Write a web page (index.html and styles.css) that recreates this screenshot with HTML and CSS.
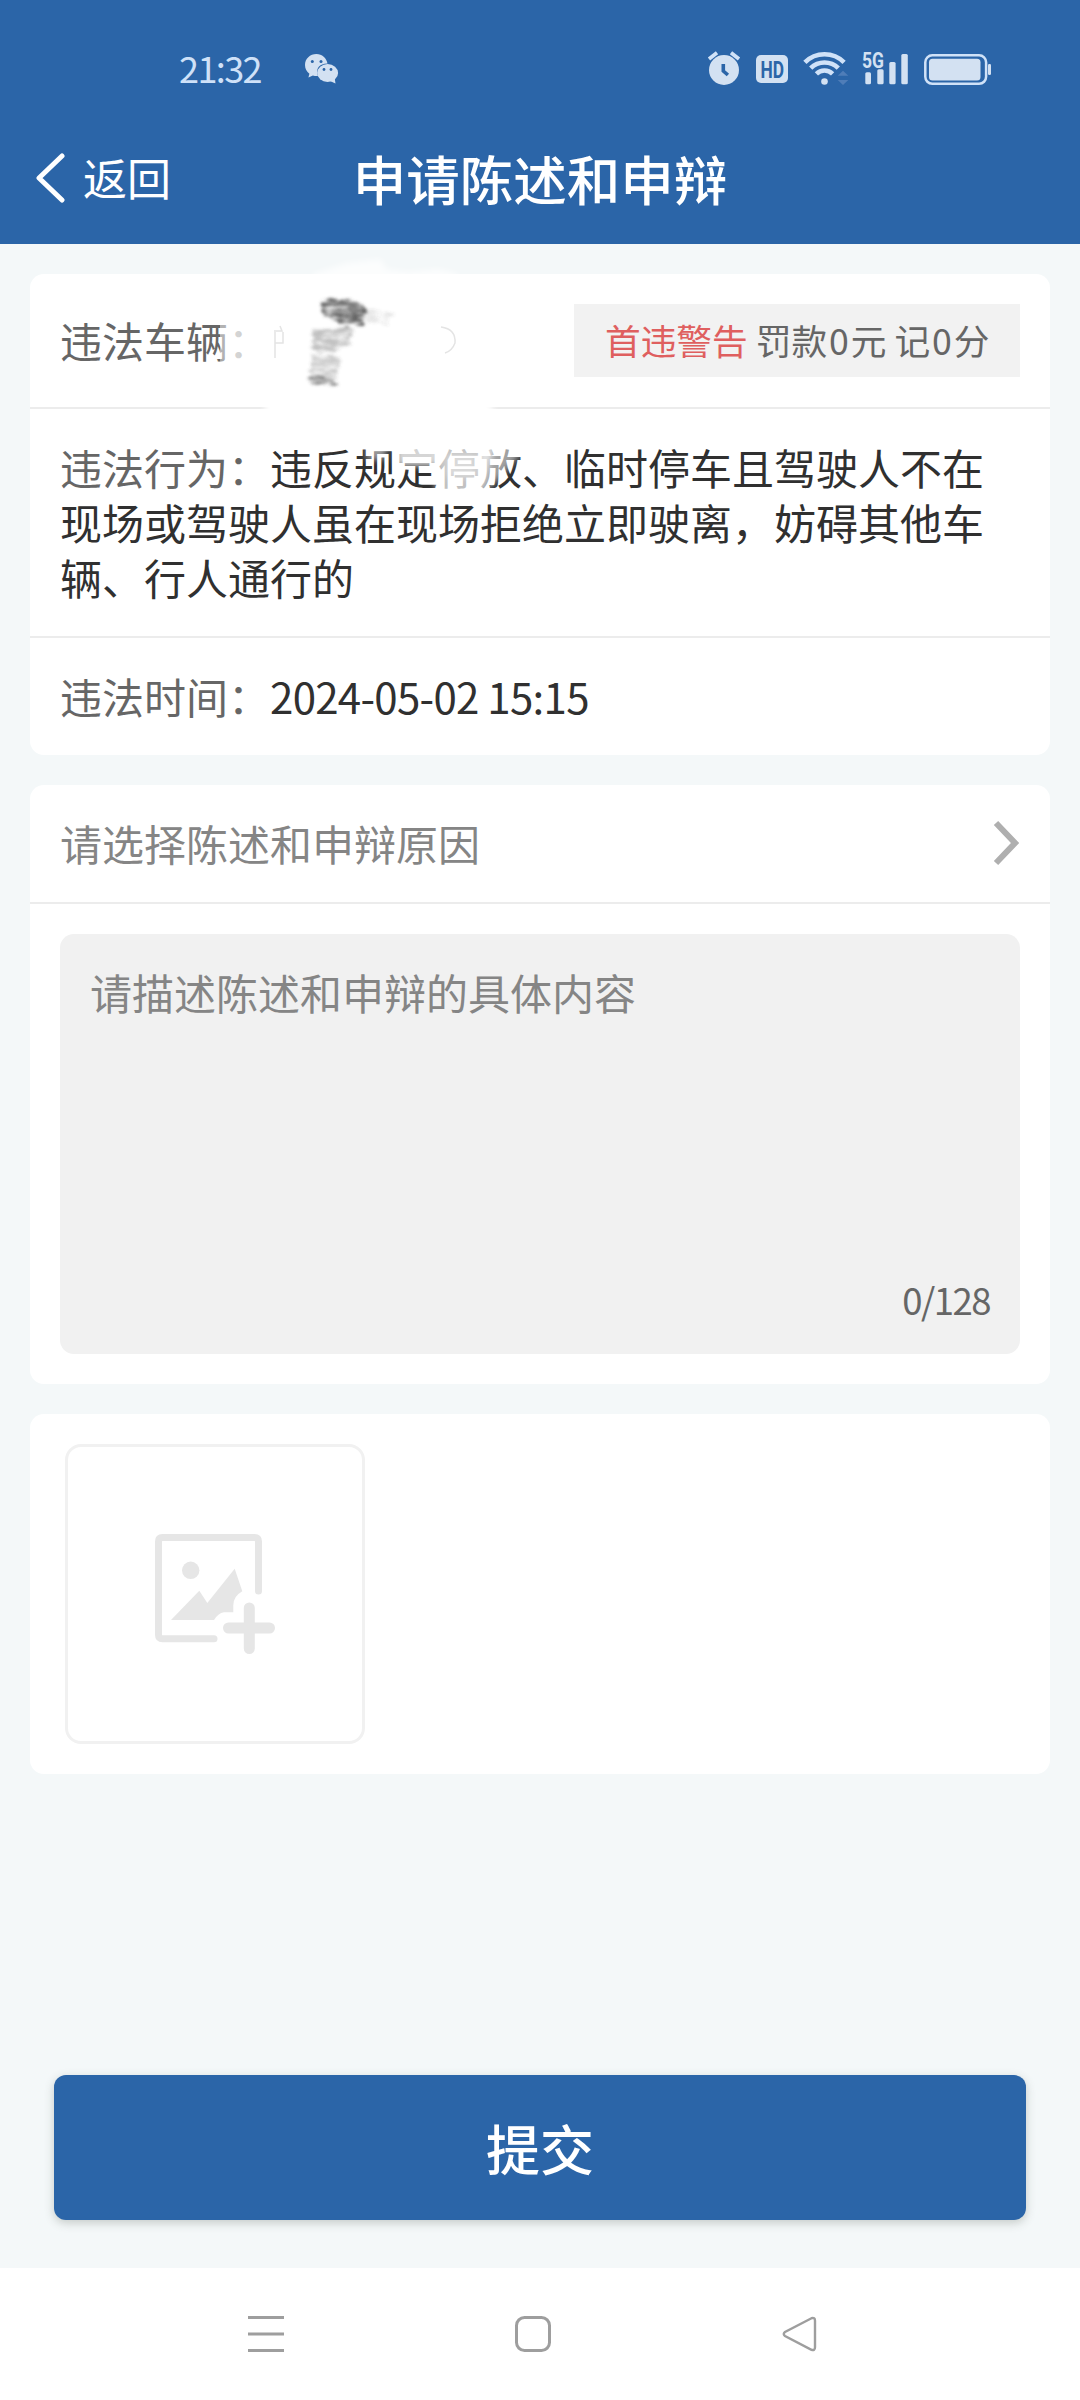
FILE: index.html
```html
<!DOCTYPE html>
<html lang="zh-CN">
<head>
<meta charset="utf-8">
<title>申请陈述和申辩</title>
<link rel="stylesheet" href="styles.css">
</head>
<body>
<header class="header">
  <div class="status">
    <span class="clock">21:32</span>
    <svg class="wechat" width="34" height="30" viewBox="0 0 34 30">
      <path class="tint" d="M11.5 0C5 0 0 4.700 0 11c0 3.700 1.800 6.800 4.400 8.800L3.400 23.500l4.500-2c2 .6 4 .7 5 .4C10 15 14.500 9.500 22.500 9.500 21.500 4 17 0 11.500 0z"/>
      <ellipse class="tint" cx="22.600" cy="19" rx="10.500" ry="9"/>
      <path class="tint" d="M25 27l5.500 2.500-.8-5z"/>
      <g class="cut"><circle cx="7.300" cy="7.500" r="1.500"/><circle cx="16" cy="7.500" r="1.500"/><circle cx="19" cy="15.500" r="1.400"/><circle cx="26" cy="15.500" r="1.400"/></g>
    </svg>
    <div class="indicators">
      <svg width="32" height="34" viewBox="0 0 32 34">
        <circle class="tint" cx="16" cy="19" r="15"/>
        <path class="tint-line" stroke-width="3.800" d="M1 8l8-6.200M31 8l-8-6.200"/>
        <path class="cut-line" stroke-width="3.600" d="M15.300 13v7l4.600 4"/>
      </svg>
      <svg width="32" height="34" viewBox="0 0 32 34">
        <rect class="tint" y="4" width="32" height="28" rx="5"/>
        <text class="icon-text cut" x="4.500" y="26.500" font-size="23" textLength="23.500" lengthAdjust="spacingAndGlyphs">HD</text>
      </svg>
      <svg width="45" height="34" viewBox="0 0 45 34">
        <path class="tint-line" stroke-width="4.600" d="M.9 11.400a27.700 27.700 0 0 1 39.200 0M6.700 17.200a19.500 19.500 0 0 1 27.600 0M12.400 22.900a11.500 11.500 0 0 1 16.200 0"/>
        <circle class="tint" cx="20.500" cy="30.500" r="3.300"/>
        <path class="traffic" d="M33.700 24.700l5.300-5 5.300 5zM33.700 29l5.300 5 5.300-5z"/>
      </svg>
      <svg class="signal" width="47" height="34" viewBox="0 0 47 34">
        <text class="icon-text tint" x="0" y="16.500" font-size="21.500" textLength="22" lengthAdjust="spacingAndGlyphs">5G</text>
        <g class="tint"><rect x="3.300" y="21.300" width="5.700" height="12" rx="1.500"/><rect x="15.300" y="18.300" width="6.300" height="15" rx="1.500"/><rect x="27.300" y="11" width="6.300" height="22.300" rx="1.500"/><rect x="39.300" y="3" width="6.500" height="30.300" rx="1.500"/></g>
      </svg>
      <svg class="battery" width="68" height="34" viewBox="0 0 68 34">
        <rect class="tint-line" stroke-width="2.500" x="1.300" y="4.300" width="60.800" height="28.500" rx="7"/>
        <rect class="tint" x="5" y="7.700" width="51.500" height="21.700" rx="3.500"/>
        <rect class="tint" x="64" y="13" width="3" height="11" rx="1.200"/>
      </svg>
    </div>
  </div>
  <nav class="titlebar">
    <div class="back">
      <svg width="30" height="50" viewBox="0 0 30 50"><path d="M27 3L4 25l23 22"/></svg>
      <span>返回</span>
    </div>
    <h1 class="title">申请陈述和申辩</h1>
  </nav>
</header>

<main class="content">
  <section class="card info">
    <div class="row vehicle">
      <span class="label">违法车辆：</span>
      <span class="badge"><span class="warn">首违警告</span> 罚款<span class="digit">0</span>元 记<span class="digit">0</span>分</span>
    </div>
    <div class="row behavior">
      <p><span class="label">违法行为：</span>违反规定停放、临时停车且驾驶人不在现场或驾驶人虽在现场拒绝立即驶离，妨碍其他车辆、行人通行的</p>
    </div>
    <div class="row time"><span class="label">违法时间：</span><span class="date">2024-05-02 15:15</span></div>
    <svg class="smudge" width="340" height="250" viewBox="220 250 340 250">
      <defs>
        <filter id="soft" x="-30%" y="-30%" width="160%" height="160%"><feGaussianBlur stdDeviation="3"/></filter>
        <filter id="rough" x="-20%" y="-20%" width="140%" height="140%">
          <feTurbulence type="fractalNoise" baseFrequency="0.08 0.3" numOctaves="3" seed="9" result="n"/>
          <feDisplacementMap in="SourceGraphic" in2="n" scale="10" result="d"/>
          <feColorMatrix in="n" type="matrix" values="0 0 0 0 .25  0 0 0 0 .25  0 0 0 0 .25  2.200 0 0 0 -0.400" result="m"/>
          <feComposite in="d" in2="m" operator="in"/><feGaussianBlur stdDeviation="1.600"/>
        </filter>
      </defs>
      <g class="wipe" filter="url(#soft)">
        <path d="M313 274l34-11 34-4 5 10 22 3 30-3 20 5v6H313z" opacity=".7"/>
        <path d="M270 375h205l22 42-60 10H262z"/>
        <path d="M205 322l40-9v55l-32-6z" opacity=".5"/>
        <path d="M231 310h30v60h-30z" opacity=".45"/>
        <path d="M366 446h20v14h-20z" opacity=".5"/>
        <path d="M396 444h42v22h-42z" opacity=".8"/>
        <path d="M436 440h46l12 10-14 48h-44z" opacity=".7"/>
        <path d="M446 454h30v24h-30z" opacity=".4"/>
        <path d="M480 440h42v12l-20 24-22 20z" opacity=".55"/>
      </g>
      <path class="trace" d="M274 331h8l-2-5M275 332v26M275 343h8v-11M441 327q15 2 14 16-3 8-10 10"/>
      <g class="ink" filter="url(#rough)">
        <path d="M319 300l32-1 16 9-4 17-18 1-22-10z" opacity=".85"/>
        <path d="M360 307l34 5-8 12-24-3z" opacity=".15"/>
        <path d="M313 329l40-2-3 17-18 9-20-3z" opacity=".34"/>
        <path d="M312 354l28 3-4 22-27 2z" opacity=".3"/>
        <path d="M309 376l26 3 1 7-26-3z" opacity=".65"/>
      </g>
    </svg>
  </section>

  <section class="card">
    <div class="row reason">
      <span>请选择陈述和申辩原因</span>
      <svg width="26" height="48" viewBox="0 0 26 48"><path d="M3 4l19 20L3 44"/></svg>
    </div>
    <div class="editor">
      <div class="textarea">
        <span class="placeholder">请描述陈述和申辩的具体内容</span>
        <span class="counter">0/128</span>
      </div>
    </div>
  </section>

  <section class="card photos">
    <div class="upload">
      <svg width="120" height="120" viewBox="0 0 120 120">
        <path class="frame" d="M59 104.700H7.500q-4 0-4-4V7.500q0-4 4-4h92q4 0 4 4V57"/>
        <circle cx="35.700" cy="36.300" r="8.700"/>
        <path d="M16 86l28.300-29.300 8 12.300 27.400-34.300 7.600 22.600q-9 5-9 14v7H69q-6 1-10 7.700z"/>
        <path class="plus" d="M94.300 74v40.500M73.500 94h41"/>
      </svg>
    </div>
  </section>
</main>

<footer class="footer"><button class="submit">提交</button></footer>

<div class="sysnav">
  <svg width="36" height="36" viewBox="0 0 36 36"><path d="M0 1.500h36M0 18h36M0 34.500h36"/></svg>
  <svg width="36" height="36" viewBox="0 0 36 36"><rect x="1.500" y="1.500" width="33" height="33" rx="8"/></svg>
  <svg width="36" height="36" viewBox="0 0 36 36"><path d="M29.500 2.200L3 16q-2.500 2 0 4l26.500 13.800q3.500 1 3.500-2.500V4.700q0-3.500-3.500-2.500z" stroke-width="2.400"/></svg>
</div>
</body>
</html>
```
FILE: styles.css
```css
* { box-sizing: border-box; }
body {
  margin: 0;
  width: 1080px;
  height: 2400px;
  display: flex;
  flex-direction: column;
  overflow: hidden;
  background: #f4f8f9;
  color: #303030;
  font: 42px/55px "Noto Sans CJK SC", sans-serif;
}
svg { display: block; flex: none; fill: none; }

.header { height: 244px; background: #2b65a8; color: #fff; }
.status { display: flex; align-items: center; height: 116px; padding: 20px 88px 0 179px; }
.clock { width: 126px; color: #cfe1f8; font-size: 36px; line-height: 36px; font-weight: 400; letter-spacing: -1.600px; padding-bottom: 2px; }
.wechat { margin-top: 2px; }
.indicators { display: flex; margin-left: auto; gap: 16px; }
.indicators svg { overflow: visible; }
.signal { margin-left: -3px; }
.battery { margin-left: -1px; }
.tint { fill: #d3e1f2; }
.tint-line { stroke: #d0e2f8; }
.cut { fill: #2b65a8; }
.cut-line { stroke: #2b65a8; }
.traffic { fill: #4f7db8; }
.icon-text { font-family: "Roboto", sans-serif; font-weight: 700; }

.titlebar { display: grid; grid-template-columns: 1fr auto 1fr; align-items: center; height: 128px; padding: 0 35px; }
.back { display: flex; align-items: center; gap: 18px; font-size: 44px; }
.back svg { stroke: #fff; stroke-width: 5; stroke-linecap: round; stroke-linejoin: round; margin-top: -4px; }
.back span { padding-bottom: 5px; }
.title { margin: 0; padding-bottom: 4px; font-size: 53.500px; font-weight: 500; line-height: 70px; }

.content { flex: 1; display: flex; flex-direction: column; gap: 30px; padding: 30px 30px 0; }
.card { background: #fff; border-radius: 14px; }
.row { display: flex; align-items: center; padding: 0 30px 2px; border-bottom: 2px solid #ececec; }
.label { color: #666; }
.info { position: relative; }
.vehicle { height: 135px; justify-content: space-between; padding-bottom: 0; }
.vehicle .label { padding-bottom: 2px; }
.badge { height: 73px; width: 446px; padding-left: 31px; background: #f2f2f2; color: #666; font-size: 35.700px; line-height: 72px; white-space: nowrap; }
.warn { color: #df5f5f; }
.digit { margin: 0 1.900px; }
.behavior { height: 229px; }
.behavior p { margin: 0; }
.time { height: 117px; border: 0; }
.date { letter-spacing: -.7px; }
.smudge { position: absolute; left: 190px; top: -24px; }
.wipe { fill: #fff; }
.trace { stroke: #e4e4e4; stroke-width: 1.500; }
.ink { fill: #444; }

.reason { height: 119px; color: #858585; justify-content: space-between; }
.reason svg { stroke: #afafaf; stroke-width: 6; margin: 0 1px 0 0; }
.editor { padding: 30px; }
.textarea { display: flex; flex-direction: column; justify-content: space-between; height: 420px; padding: 30px 30px 27px; border-radius: 14px; background: #f1f1f1; color: #858585; }
.counter { align-self: flex-end; color: #666; font-size: 36.500px; letter-spacing: -1.500px; }

.photos { padding: 30px 35px; }
.upload { display: flex; align-items: center; justify-content: center; width: 300px; height: 300px; border: 3px solid #f1f1f1; border-radius: 16px; }
.upload svg { fill: #e6e6e6; }
.upload .frame { fill: none; stroke: #e6e6e6; stroke-width: 7; stroke-linecap: round; }
.upload .plus { stroke: #e6e6e6; stroke-width: 11; stroke-linecap: round; }

.footer { padding: 0 54px 48px; }
.submit { display: block; width: 972px; height: 145px; border: 0; border-radius: 12px; background: #2b65a8; color: #fff; font: 500 54px/70px "Noto Sans CJK SC", sans-serif; box-shadow: 0 3px 10px rgba(60, 70, 60, .25); }
.sysnav { display: flex; align-items: center; gap: 231px; height: 132px; padding-left: 248px; background: #fff; }
.sysnav svg { stroke: #9e9e9e; stroke-width: 3; }
```
